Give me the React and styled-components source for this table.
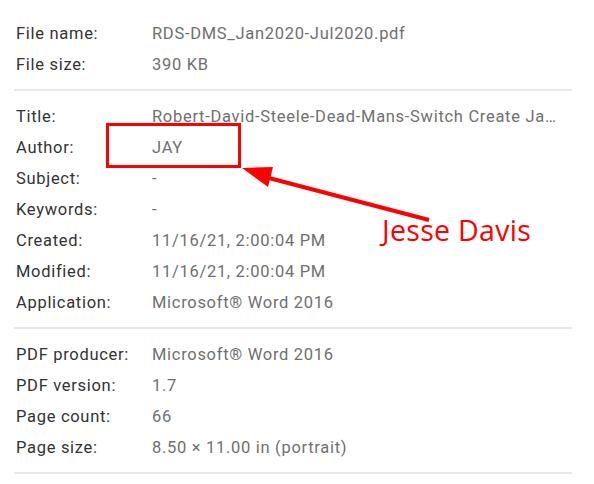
import React from 'react';
import styled, { createGlobalStyle } from 'styled-components';

const GlobalStyle = createGlobalStyle`
  html, body {
    margin: 0;
    padding: 0;
    background: #fff;
  }
  body {
    font-family: Roboto, "Liberation Sans", sans-serif;
  }
`;

const sections = [
  [
    ['File name:', 'RDS-DMS_Jan2020-Jul2020.pdf'],
    ['File size:', '390 KB'],
  ],
  [
    ['Title:', 'Robert-David-Steele-Dead-Mans-Switch Create January 2020 - July 2020'],
    ['Author:', 'JAY'],
    ['Subject:', '-'],
    ['Keywords:', '-'],
    ['Created:', '11/16/21, 2:00:04 PM'],
    ['Modified:', '11/16/21, 2:00:04 PM'],
    ['Application:', 'Microsoft® Word 2016'],
  ],
  [
    ['PDF producer:', 'Microsoft® Word 2016'],
    ['PDF version:', '1.7'],
    ['Page count:', '66'],
    ['Page size:', '8.50 × 11.00 in (portrait)'],
  ],
];

const App = () => (
  <>
    <GlobalStyle />
    <Page>
      <Properties>
        {sections.map((rows, i) => (
          <Section key={i} first={i === 0}>
            {rows.map(([label, value]) => (
              <Row key={label}>
                <Label>{label}</Label>
                <Value>{value}</Value>
              </Row>
            ))}
          </Section>
        ))}
      </Properties>

      {/* annotation overlay drawn on top of the dialog */}
      <HighlightBox />
      <Arrow width="200" height="70" viewBox="0 0 200 70">
        <line x1="28" y1="14" x2="188" y2="56" stroke="#ff0000" strokeWidth="4" />
        <polygon points="1,4 32,3 27,23" fill="#ff0000" />
      </Arrow>
      <Annotation>Jesse Davis</Annotation>
    </Page>
  </>
);

const Page = styled.div`
  position: relative;
  width: 594px;
  height: 484px;
  overflow: hidden;
  background: #fff;
`;

const Properties = styled.div`
  width: 558px;
  margin-left: 14px;
  padding-top: 18px;
`;

const Section = styled.div`
  padding: ${({ first }) => (first ? '0 0 9px' : '10px 0 9px')};
  border-bottom: 2px solid #e8e8e8;
`;

const Row = styled.div`
  display: flex;
  height: 31px;
  align-items: center;
  font-size: 16.5px;
  letter-spacing: 0.7px;
  padding-left: 2px;
`;

const Label = styled.span`
  flex: 0 0 136px;
  color: #333;
`;

const Value = styled.span`
  flex: 1;
  min-width: 0;
  color: #707070;
  white-space: nowrap;
  overflow: hidden;
  text-overflow: ellipsis;
  padding-right: 8px;
`;

const HighlightBox = styled.div`
  position: absolute;
  left: 106px;
  top: 123px;
  width: 129px;
  height: 39px;
  border: 3px solid #ff0000;
`;

const Arrow = styled.svg`
  position: absolute;
  left: 241px;
  top: 164px;
`;

const Annotation = styled.div`
  position: absolute;
  left: 382px;
  top: 211px;
  font-family: "Open Sans", "Noto Sans", sans-serif;
  font-size: 28.5px;
  line-height: 38px;
  letter-spacing: 0.3px;
  color: #ff0000;
`;

export default App;
